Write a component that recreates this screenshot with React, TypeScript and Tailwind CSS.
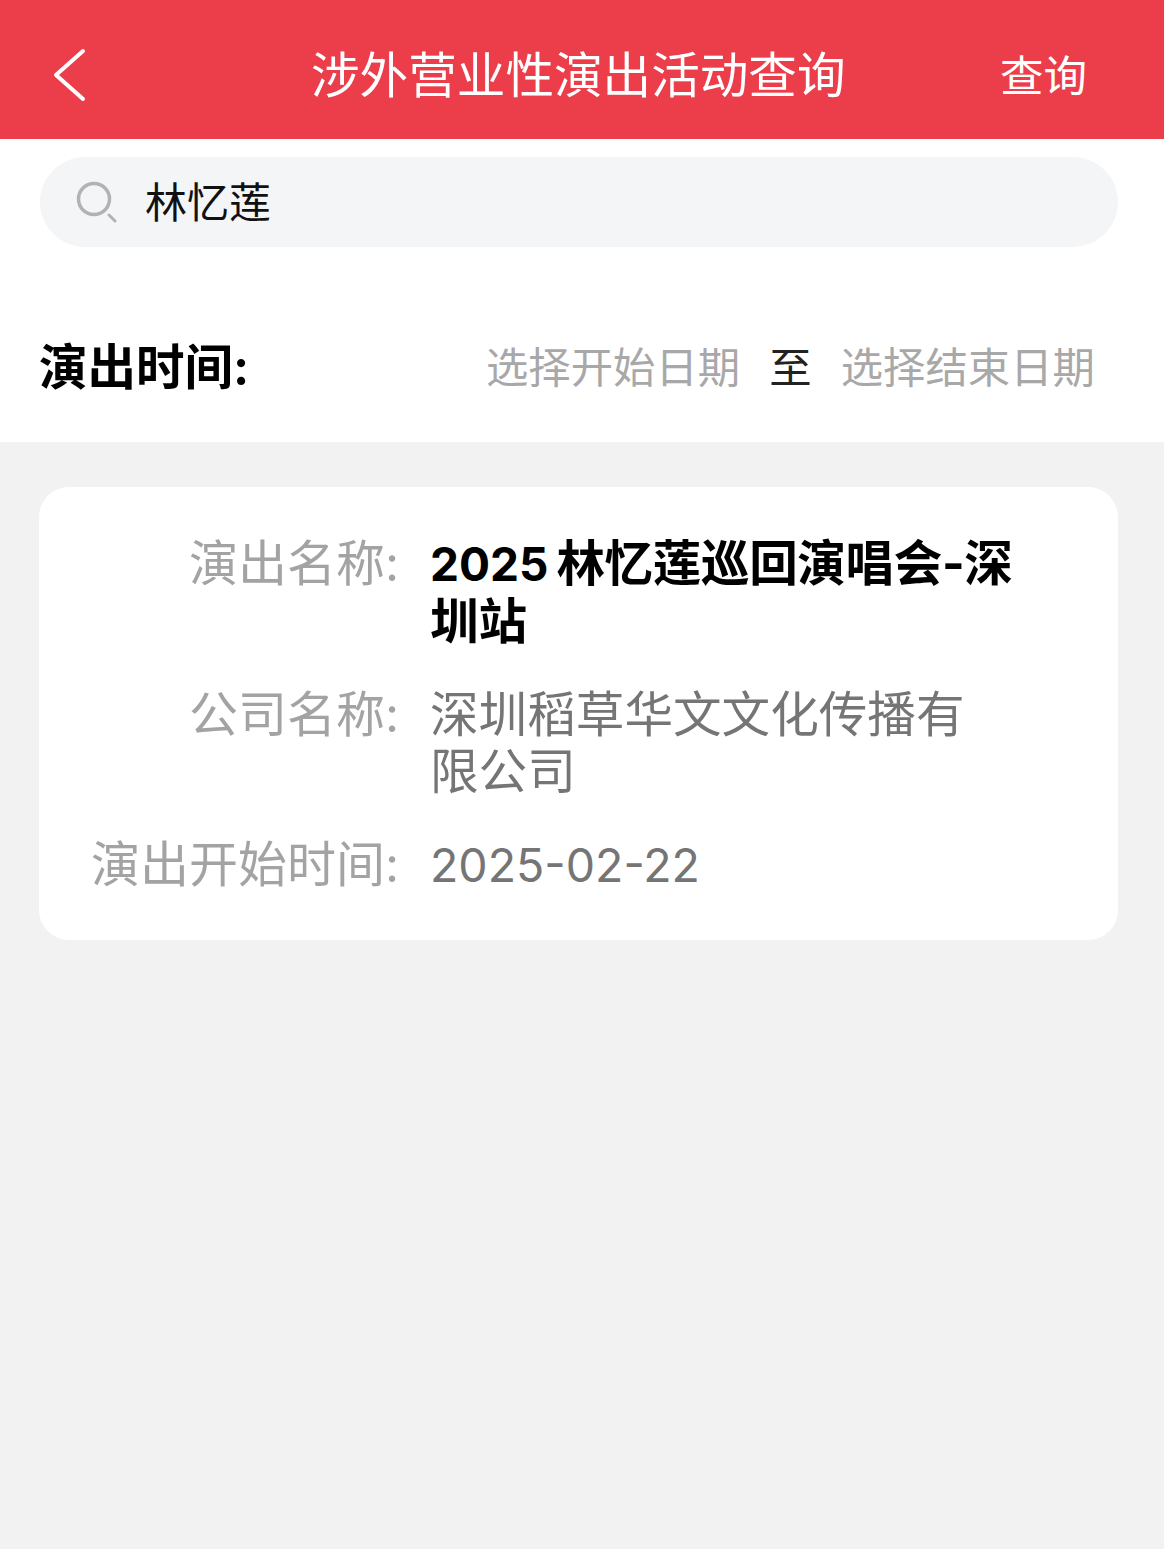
const F = '"Inter", "Noto Sans CJK SC", sans-serif';
export default function App() {
  return (
    <div className="flex min-h-[1549px] flex-col bg-[#f2f2f2]" style={{ fontFamily: F }}>
      <header className="flex h-[139px] items-center bg-[#ec3e4a] pl-[50px] pr-[77px] text-white">
        <svg className="mt-[10px]" width="40" height="60" viewBox="0 0 40 60" fill="none" stroke="#fff" strokeWidth="4" strokeLinecap="round" strokeLinejoin="round"><path d="M33 6 L6 30 L33 54" /></svg>
        <h1 className="ml-[221px] mt-[14px] text-[48.6px] font-normal leading-none">涉外营业性演出活动查询</h1>
        <span className="ml-auto mt-[14px] text-[43.5px] font-normal leading-none">查询</span>
      </header>
      <section className="bg-white pl-[40px] pr-[46px]">
        <div className="mt-[18px] flex h-[90px] items-center rounded-[45px] bg-[#f4f5f7] pl-[36px]">
          <svg width="42" height="42" viewBox="0 0 42 42" fill="none" stroke="#b2b2b2"><circle cx="18" cy="18" r="15.5" strokeWidth="3.5" /><path d="M33 34 L39 40" strokeWidth="3" strokeLinecap="round" /></svg>
          <span className="ml-[27px] mt-[2px] text-[42px] font-normal leading-none text-[#111]">林忆莲</span>
        </div>
        <div className="flex h-[195px] items-center justify-between pr-[23px] pt-[48px] leading-none">
          <span className="-ml-[1px] text-[48.5px] font-bold text-black">演出时间:</span>
          <div className="flex items-center text-[42.4px] font-normal text-[#a8a8a8]">
            <span>选择开始日期</span>
            <span className="mx-[29px] text-[#222]">至</span>
            <span>选择结束日期</span>
          </div>
        </div>
      </section>
      <section className="ml-[39px] mr-[46px] mt-[45px] flex h-[453px] flex-col gap-[36px] rounded-[30px] bg-white pt-[48px] text-[48.6px] font-normal leading-[57px]">
        <Row label="演出名称:">
          <div className="whitespace-nowrap font-bold text-black">
            <span className="text-[46px]">2025</span>
            <span className="ml-[8px] tracking-[-0.4px]">林忆莲巡回演唱会-深</span>
          </div>
          <div className="font-bold text-black">圳站</div>
        </Row>
        <Row label="公司名称:"><span className="text-[#757575]">深圳稻草华文文化传播有限公司</span></Row>
        <Row label="演出开始时间:"><span className="text-[46.5px] text-[#757575]">2025-02-22</span></Row>
      </section>
    </div>
  );
}
function Row({ label, children }: { label: string; children: React.ReactNode }) {
  return (
    <div className="flex">
      <div className="w-[360px] shrink-0 text-right text-[49px] text-[#a3a3a3]">{label}</div>
      <div className="ml-[31px] w-[582px]">{children}</div>
    </div>
  );
}
